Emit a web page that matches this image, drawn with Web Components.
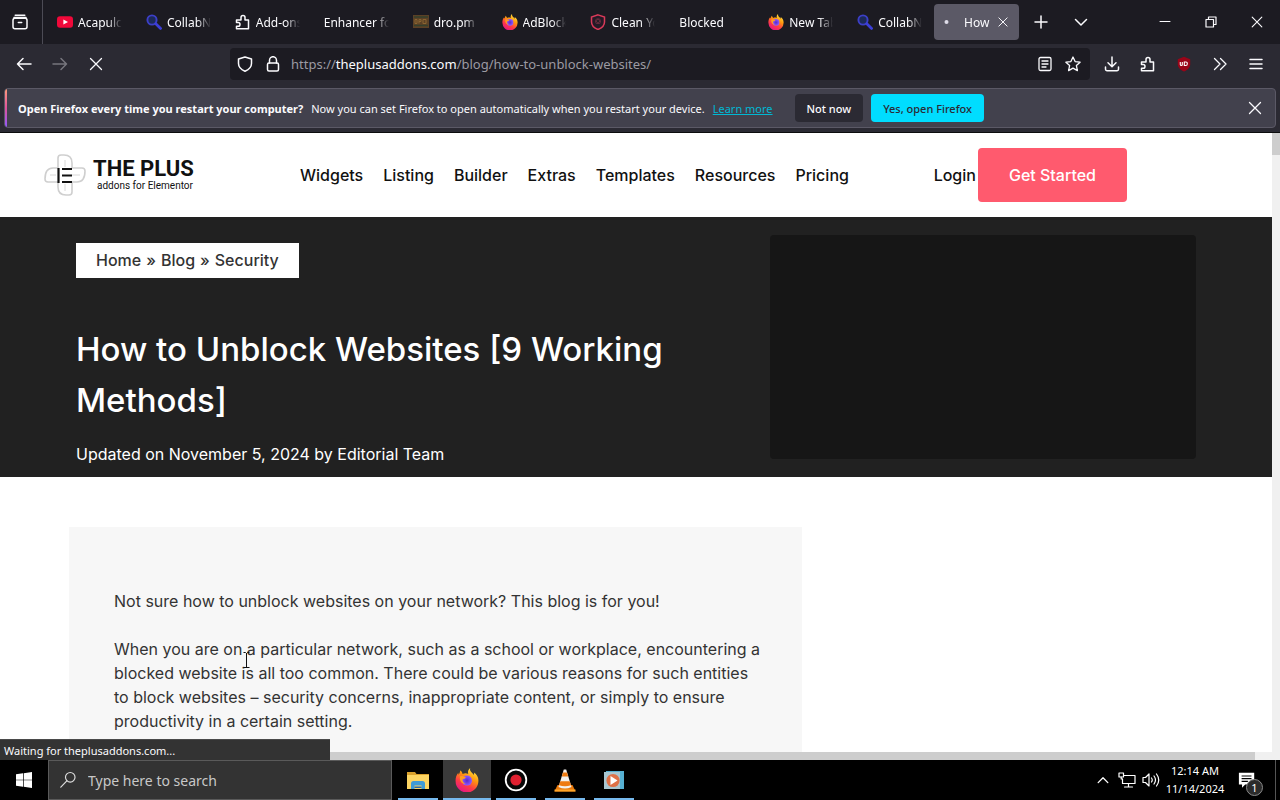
<!DOCTYPE html>
<html lang="en">
<head>
<meta charset="utf-8">
<meta name="viewport" content="width=device-width, initial-scale=1">
<title>How to Unblock Websites</title>
<style>
  html, body { margin: 0; height: 100%; }
  body {
    display: flex;
    flex-direction: column;
    overflow: hidden;
    background: #000;
    font-family: "Noto Sans", "Open Sans", sans-serif;
    font-size: 12px;
  }
  text-cursor { position: absolute; left: 242px; top: 647px; }
</style>
</head>
<body>
  <browser-window>
    <tab-strip slot="chrome">
      <browser-tab icon="youtube">Acapulco</browser-tab>
      <browser-tab icon="lens">CollabNet</browser-tab>
      <browser-tab icon="puzzle">Add-ons</browser-tab>
      <browser-tab>Enhancer for</browser-tab>
      <browser-tab icon="dropm">dro.pm</browser-tab>
      <browser-tab icon="firefox">AdBlock</browser-tab>
      <browser-tab icon="redshield">Clean You</browser-tab>
      <browser-tab>Blocked</browser-tab>
      <browser-tab icon="firefox">New Tab</browser-tab>
      <browser-tab icon="lens">CollabNet</browser-tab>
      <browser-tab icon="dot" active>How</browser-tab>
    </tab-strip>
    <nav-toolbar slot="chrome"></nav-toolbar>
    <notice-bar slot="chrome">
      <strong slot="lead">Open Firefox every time you restart your computer?</strong>
      Now you can set Firefox to open automatically when you restart your device.
    </notice-bar>

    <site-header></site-header>
    <post-hero>
      <span slot="title">How to Unblock Websites [9 Working Methods]</span>
      <span slot="meta">Updated on November 5, 2024 by Editorial Team</span>
    </post-hero>
    <post-body>
      <p>Not sure how to unblock websites on your network? This blog is for you!</p>
      <p>When you are on a particular network, such as a school or workplace, encountering a blocked website is all too common. There could be various reasons for such entities to block websites – security concerns, inappropriate content, or simply to ensure productivity in a certain setting.</p>
    </post-body>

    <span slot="status">Waiting for theplusaddons.com...</span>
  </browser-window>
  <task-bar></task-bar>
  <text-cursor></text-cursor>

<script>
// Icon set, each drawn in its own viewBox. Line icons use currentColor.
const line = (body, w = 1.3) =>
  `<g fill="none" stroke="currentColor" stroke-width="${w}" stroke-linecap="round" stroke-linejoin="round">${body}</g>`;

const ICONS = {
  history: [16, line('<path d="M3.2 1.2h9.6M2 3.6h12"/><rect x="1" y="4.2" width="14" height="10.6" rx="2"/><path d="M6.3 8.5h3.4"/>', 1.5)],
  youtube: [16, '<rect x="0" y="2.3" width="16" height="11.4" rx="3" fill="#f0093a"/><path d="M6.4 5.4v5.2L11 8z" fill="#fff"/>'],
  lens: [16, '<circle cx="6" cy="6" r="4.6" fill="#1c2a58" stroke="#3c3fc8" stroke-width="1.9"/><path d="M9.8 9.8l4.8 4.6" stroke="#3c3fd8" stroke-width="2.8" stroke-linecap="round"/>'],
  puzzle: [16, line('<path d="M1.5 14.8h12V6H10V3.4a2 2 0 0 0-4 0V6H1.5v2.6h1.7a1.8 1.8 0 0 1 0 3.6H1.5z"/>', 1.5)],
  dropm: [16, '<rect y="1" width="16" height="13" fill="#5b4126"/><path d="M1 3h14M1 11.5h14" stroke="#34402c" stroke-width="1.6"/><path d="M2 5.5v4h2v-4zM6 9.5v-4h2v2H6M10 5.5h3v4h-3z" fill="none" stroke="#8a6531"/>'],
  firefox: [24, `
    <defs>
      <linearGradient id="fx" x1=".85" y1="0" x2=".3" y2="1"><stop offset="0" stop-color="#fff14a"/><stop offset=".4" stop-color="#ff980e"/><stop offset=".7" stop-color="#ff3a45"/><stop offset="1" stop-color="#e31587"/></linearGradient>
      <radialGradient id="fp"><stop offset="0" stop-color="#592acb"/><stop offset="1" stop-color="#9059ff"/></radialGradient>
    </defs>
    <path fill="url(#fx)" d="M15.2 0c-.6 2 .2 3.2 1.5 4.5 1 1 1.6 1.5 2 2.5.5-.8.4-1.6.2-2.4C22 6.5 23.6 9.7 23.4 13A11.4 11.4 0 0 1 .6 13.2C.4 10 1.3 6.9 3.3 4.7c0 .9.1 1.4.4 2C4.8 5.2 5 3.7 5.2 2.6c1.2.6 2 1.9 2.400 3.300 2.200-.8 4-.7 5.700.1C12.500 3.800 13.200 1.500 15.200 0z"/>
    <circle cx="12" cy="12.6" r="5" fill="url(#fp)"/>
    <path fill="#ff9d21" d="M5 8.2c2-.4 4.4 0 6 1.5-1 .9-2.5 1-3.500 1.800-.2 1.800 1 3.600 3 4.100-3 .7-6.300-2-5.500-7.400z"/>`],
  redshield: [16, '<path d="M8 .9L14.500 3v5c0 3.500-2.600 6-6.500 7.500C4.100 14 1.500 11.500 1.500 8V3z" fill="#241a26" stroke="#d93a59" stroke-width="1.5"/><circle cx="8" cy="7.2" r="2.9" fill="#632b3c"/><path d="M6.500 5.700l3 3m0-3l-3 3" stroke="#1c1b22"/>'],
  dot: [16, '<circle cx="2.5" cy="8" r="2" fill="#dedce8"/>'],
  close: [16, line('<path d="M2.5 2.5l11 11M13.5 2.5l-11 11"/>')],
  plus: [16, line('<path d="M8 2v12M2 8h12"/>', 1.5)],
  down: [16, line('<path d="M2.5 5.5L8 11l5.5-5.5"/>', 1.5)],
  up: [16, line('<path d="M2.5 11L8 5.5l5.5 5.5"/>', 1.5)],
  minimize: [16, line('<path d="M3 7.5h10"/>', 1)],
  restore: [16, line('<path d="M3 5.5h7.500V13H3z"/><path d="M5.500 5.500V3H13v7.500h-2.500"/>', 1.2)],
  back: [16, line('<path d="M15 8H1.500M7 2.500L1.500 8 7 13.500"/>', 1.5)],
  forward: [16, line('<path d="M1 8h13.500M9 2.500L14.500 8 9 13.500"/>', 1.5)],
  shield: [16, line('<path d="M8 1l6.500 2v4.500c0 3.500-2.500 6-6.500 7.800-4-1.800-6.500-4.300-6.500-7.800V3z"/>', 1.5)],
  lock: [16, line('<rect x="2.5" y="7" width="11" height="8" rx="1.5"/><path d="M4.500 7V4.200a3.500 3.500 0 0 1 7 0V7"/>', 1.5)],
  reader: [16, line('<rect x="2" y="1.5" width="12" height="13" rx="1.5"/><path d="M5 5h6M5 8h6M5 11h4"/>')],
  star: [16, line('<path d="M8 1l2.100 4.600 5 .6-3.700 3.400 1 5L8 12.100l-4.400 2.500 1-5L.9 6.200l5-.6z"/>')],
  download: [16, line('<path d="M8 1v9.500M4 6.800l4 3.900 4-3.900M1.500 11v2.300c0 .8.6 1.400 1.400 1.400h10.200c.8 0 1.400-.6 1.400-1.400V11"/>', 1.5)],
  ublock: [16, '<path d="M8 .8l6.200 2.400v5C14.200 11.500 11.500 14 8 15.500 4.500 14 1.800 11.500 1.800 8.200v-5z" fill="#9a0418"/><path d="M4.300 6v2.500q0 1 1 1t1-1V6M8.300 6v3.500h1.500q1.500 0 1.500-1.800T9.800 6z" fill="none" stroke="#fff" stroke-width="1.1"/>'],
  chevrons: [16, line('<path d="M2.500 2.500L8 8l-5.500 5.500M8.500 2.500L14 8l-5.500 5.500"/>')],
  menu: [16, line('<path d="M2 3.500h12M2 8h12M2 12.500h12"/>', 1.5)],
  windows: [16, '<path fill="#fff" d="M0 2.300l7-1v6.400H0zM7.700 1.200L16 0v7.700H7.700zM0 8.300h7v6.400l-7-1zM7.700 8.300H16V16l-8.300-1.200z"/>'],
  search: [20, line('<circle cx="12.5" cy="7" r="5.3"/><path d="M8.700 10.900L2 18"/>')],
  folder: [24, '<path fill="#d9a02c" d="M1 4h8l1.500 2H23v15H1z"/><path fill="#fcd462" d="M1 7h22v14H1z"/><path fill="#3f9bd6" d="M5 21v-5.500Q5 13 7.500 13h9q2.500 0 2.500 2.500V21h-3.500v-3.500h-7V21z"/><path fill="#2268b0" d="M8.500 18.500h7V20h-7z"/>'],
  record: [24, '<circle cx="12" cy="12" r="10.3" fill="#080808" stroke="#fff" stroke-width="1.8"/><circle cx="12" cy="12" r="5.6" fill="#e02030"/>'],
  vlc: [24, '<path fill="#e8780a" d="M4.500 17h15l3 6.500h-21z"/><path fill="#ffa62b" d="M1.500 21.500h21v2h-21z"/><path fill="#f3f1ee" d="M10.800 1.500h2.400L18.500 19q-6.500 3-13 0z"/><path fill="#ee7b12" d="M10 4.500h4l1.200 4H8.800zM7.300 13.200h9.400l1.300 4q-6 2.300-12 0z"/>'],
  player: [24, '<path fill="#56b0d2" d="M4 3h18v18H4z"/><path fill="#a9c6d0" d="M2 4h16v17H2z"/><circle cx="11" cy="12.5" r="6.6" fill="#df7147"/><path fill="#fff" d="M8.500 8v9l7-4.500z"/>'],
  network: [18, line('<path d="M6 4.500h11v8H4.500V8M10.500 12.500V16M6.500 16h8"/><rect x="1" y="2" width="4.5" height="4"/><path d="M3.200 6v2h1.300"/>', 1.2)],
  sound: [18, line('<path d="M1 6.500h2.500L7 3v12l-3.500-3.500H1zM9.500 7q1.500 2 0 4M12 5q3 4 0 8M14.500 3q4.500 6 0 12"/>', 1.2)],
  message: [20, '<path fill="#fff" d="M1 2h17v13H8l-3.500 3.500V15H1z"/><path d="M4 5.500h11M4 8.500h11M4 11.500h7" stroke="#000" stroke-width="1.2"/>'],
};

class UiIcon extends HTMLElement {
  connectedCallback() {
    const [box, body] = ICONS[this.getAttribute('name')];
    const size = this.getAttribute('size') || 16;
    if (!this.shadowRoot) this.attachShadow({ mode: 'open' });
    this.shadowRoot.innerHTML = `
      <style>
        :host { display: block; flex: none; }
        svg { display: block; }
      </style>
      <svg width="${size}" height="${size}" viewBox="0 0 ${box} ${box}" aria-hidden="true">${body}</svg>`;
  }
}
customElements.define('ui-icon', UiIcon);

// Registers an element whose shadow root is stamped from a static string
function define(tag, html) {
  const tpl = document.createElement('template');
  tpl.innerHTML = html;
  customElements.define(tag, class extends HTMLElement {
    constructor() {
      super();
      this.attachShadow({ mode: 'open' }).appendChild(tpl.content.cloneNode(true));
    }
  });
}

const BUTTON_RESET = `
  button {
    display: flex; align-items: center; justify-content: center;
    border: 0; padding: 0; margin: 0; background: none;
    color: inherit; font: inherit; cursor: pointer;
  }`;

// --- browser chrome ---

define('browser-window', `
  <style>
    :host { display: flex; flex-direction: column; flex: 1; min-height: 0; background: #2b2a33; }
    .chrome { padding-bottom: 4px; border-bottom: 1px solid #0c0c0d; color: #fbfbfe; }
    .view {
      position: relative; flex: 1; min-height: 0; display: grid;
      grid-template: minmax(0, 1fr) 8px / minmax(0, 1fr) 8px; background: #fff;
    }
    .page { overflow: hidden; grid-row: 1; grid-column: 1; min-height: 0; background: #fff; }
    .vbar { grid-column: 2; grid-row: 1 / 3; background: #f0f0f0; }
    .vbar i { display: block; height: 22px; background: #cdcdcd; }
    .hbar { grid-column: 1; grid-row: 2; background: #f0f0f0; padding-right: 17px; }
    .hbar i { display: block; height: 8px; background: #cdcdcd; }
    .status {
      position: absolute; left: 0; bottom: 0; z-index: 1;
      box-sizing: border-box; width: 330px; height: 21px; padding: 1px 0 0 4px;
      border-top: 1px solid #4a4a4a; background: #333;
      color: #fbfbfe; font-size: 11px; line-height: 20px;
    }
  </style>
  <div class="chrome"><slot name="chrome"></slot></div>
  <div class="view">
    <main class="page"><slot></slot></main>
    <div class="vbar"><i></i></div>
    <div class="hbar"><i></i></div>
    <div class="status"><slot name="status"></slot></div>
  </div>
`);

define('tab-strip', `
  <style>
    ${BUTTON_RESET}
    :host { display: flex; height: 44px; background: #1c1b22; }
    .history { width: 43px; box-sizing: border-box; padding-right: 2px; border-right: 1px solid #4c4b55; }
    .tabs { display: flex; flex: 0 1 978px; min-width: 0; }
    .tool { width: 40px; }
    .window { display: flex; margin-left: auto; }
    .window button { width: 46px; }
  </style>
  <button class="history" aria-label="Firefox View"><ui-icon name="history"></ui-icon></button>
  <div class="tabs"><slot></slot></div>
  <button class="tool" aria-label="New tab"><ui-icon name="plus"></ui-icon></button>
  <button class="tool" aria-label="List all tabs"><ui-icon name="down"></ui-icon></button>
  <div class="window">
    <button aria-label="Minimize"><ui-icon name="minimize"></ui-icon></button>
    <button aria-label="Restore"><ui-icon name="restore"></ui-icon></button>
    <button aria-label="Close"><ui-icon name="close" size="14"></ui-icon></button>
  </div>
`);

class BrowserTab extends HTMLElement {
  connectedCallback() {
    if (this.shadowRoot) return;
    const icon = this.getAttribute('icon');
    const active = this.hasAttribute('active');
    this.attachShadow({ mode: 'open' }).innerHTML = `
      <style>
        ${BUTTON_RESET}
        :host { display: flex; flex: 1 1 0; min-width: 0; padding: 4px 2px; }
        .tab { display: flex; align-items: center; flex: 1; min-width: 0; padding: 0 8px 0 12px; gap: 5px; border-radius: 4px; }
        .title {
          --fade: 14px;
          flex: 1; min-width: 0; overflow: hidden; white-space: nowrap;
          -webkit-mask-image: linear-gradient(to left, transparent, #000 var(--fade));
          mask-image: linear-gradient(to left, transparent, #000 var(--fade));
        }
        :host([active]) .tab { background: #5b5966; padding: 0 10px; gap: 4px; }
        :host([active]) .title { --fade: 4px; }
      </style>
      <div class="tab" role="tab" aria-selected="${active}">
        ${icon ? `<ui-icon name="${icon}"></ui-icon>` : ''}
        <span class="title"><slot></slot></span>
        ${active ? '<button aria-label="Close tab"><ui-icon name="close" size="12"></ui-icon></button>' : ''}
      </div>`;
  }
}
customElements.define('browser-tab', BrowserTab);

define('nav-toolbar', `
  <style>
    ${BUTTON_RESET}
    :host { display: flex; align-items: center; gap: 4px; height: 40px; padding: 0 8px 4px; }
    button { width: 32px; height: 32px; }
    button[disabled] { color: #77767e; }
    .spring { flex: 0 1 110px; }
    .url {
      display: flex; align-items: center; flex: 1; min-width: 0; height: 32px;
      box-sizing: border-box; padding: 0 3px 0 1px; border-radius: 4px; background: #1c1b22;
    }
    .url button { width: 28px; }
    .address { flex: 1; padding-left: 4px; font-size: 13px; color: #9b9aa2; white-space: nowrap; }
    .address b { font-weight: 400; color: #fbfbfe; }
    .end { margin-left: 2px; }
  </style>
  <button aria-label="Back"><ui-icon name="back"></ui-icon></button>
  <button aria-label="Forward" disabled><ui-icon name="forward"></ui-icon></button>
  <button aria-label="Stop"><ui-icon name="close"></ui-icon></button>
  <div class="spring"></div>
  <div class="url">
    <button aria-label="Tracking protection"><ui-icon name="shield"></ui-icon></button>
    <button aria-label="Site information"><ui-icon name="lock"></ui-icon></button>
    <div class="address" role="textbox" aria-label="Address">https://<b>theplusaddons.com</b>/blog/how-to-unblock-websites/</div>
    <button aria-label="Reader view"><ui-icon name="reader"></ui-icon></button>
    <button aria-label="Bookmark this page"><ui-icon name="star"></ui-icon></button>
  </div>
  <button class="end" aria-label="Downloads"><ui-icon name="download"></ui-icon></button>
  <button aria-label="Extensions"><ui-icon name="puzzle"></ui-icon></button>
  <button aria-label="uBlock"><ui-icon name="ublock"></ui-icon></button>
  <button aria-label="More tools"><ui-icon name="chevrons"></ui-icon></button>
  <button aria-label="Menu"><ui-icon name="menu"></ui-icon></button>
`);

define('notice-bar', `
  <style>
    ${BUTTON_RESET}
    :host {
      display: flex; align-items: center; box-sizing: border-box; height: 40px;
      margin: 0 4px; border: 1px solid #5b5966; border-radius: 4px;
      background: #42414d; overflow: hidden; white-space: nowrap; font-size: 11px;
    }
    .edge { align-self: stretch; width: 2px; margin-right: 11px; background: linear-gradient(#ff9a7b, #e0539b, #9059ff); }
    .message { display: flex; gap: 8px; }
    a { color: #00b8d4; }
    .btn { height: 28px; padding: 0 12px; border-radius: 4px; background: #2b2a33; font-weight: 500; }
    .no { margin-left: 22px; }
    .yes { margin-left: 8px; background: #00ddff; color: #2b2a33; }
    .dismiss { width: 32px; height: 32px; margin-left: auto; margin-right: 4px; }
  </style>
  <span class="edge"></span>
  <div class="message"><slot name="lead"></slot><span><slot></slot></span><a href="#">Learn more</a></div>
  <button class="btn no">Not now</button>
  <button class="btn yes">Yes, open Firefox</button>
  <button class="dismiss" aria-label="Close"><ui-icon name="close"></ui-icon></button>
`);

// --- the site ---

define('site-header', `
  <style>
    :host {
      display: flex; align-items: center; height: 84px; padding: 0 145px 0 44px;
      font: 500 16px/24px Inter, "Open Sans", sans-serif; color: #111;
    }
    a { color: inherit; text-decoration: none; white-space: nowrap; }
    .logo { display: flex; align-items: center; gap: 7px; width: 256px; }
    .logo svg { flex: none; }
    .name { display: flex; flex-direction: column; font-family: Roboto, sans-serif; font-weight: 400; }
    .name b { font-size: 22px; line-height: 22px; }
    .name small { font-size: 10px; line-height: 12px; padding-left: 4px; }
    nav { display: flex; gap: 20px; }
    .login { margin-left: auto; }
    .cta {
      margin-left: 2px; padding: 15px 31px; border-radius: 4px;
      background: #ff5a6e; color: #fff;
    }
  </style>
  <a class="logo" href="#">
    <svg width="42" height="42" viewBox="0 0 42 42" fill="none" aria-hidden="true">
      <path stroke="#cfcfcf" stroke-width="1.6" d="M14 14V4q0-3 3-3h3q8 0 8 8v5h10q3 0 3 3 0 11-8 11h-5v10q0 3-3 3h-3q-8 0-8-8v-5H4q-3 0-3-3 0-11 8-11z"/>
      <path stroke="#d8d8d8" d="M21 6v7M28 21h8M21 30v7M6 21h6"/>
      <path stroke="#111" stroke-width="2.2" d="M14.500 14v15M18 15h10M18 21.500h10M18 28h10"/>
    </svg>
    <span class="name"><b>THE PLUS</b><small>addons for Elementor</small></span>
  </a>
  <nav>
    <a href="#">Widgets</a>
    <a href="#">Listing</a>
    <a href="#">Builder</a>
    <a href="#">Extras</a>
    <a href="#">Templates</a>
    <a href="#">Resources</a>
    <a href="#">Pricing</a>
  </nav>
  <a class="login" href="#">Login</a>
  <a class="cta" href="#">Get Started</a>
`);

define('post-hero', `
  <style>
    :host {
      display: grid; grid-template-columns: 62% 38%;
      padding: 18px 76px 11px; background: #212121; color: #fff;
      font: 16px/24px Inter, "Open Sans", sans-serif;
    }
    .crumbs {
      display: inline-flex; gap: 5px; margin-top: 8px; padding: 0 20px;
      background: #fff; color: #333; font-weight: 500; line-height: 35px;
    }
    .crumbs a { color: inherit; text-decoration: none; }
    h1 { margin: 46px 0 16px; font-size: 33px; line-height: 51px; font-weight: 500; }
    p { margin: 0; }
    .cover { height: 224px; border-radius: 4px; background: #161616; }
  </style>
  <div>
    <nav class="crumbs"><a href="#">Home</a>»<a href="#">Blog</a>»<a href="#">Security</a></nav>
    <h1><slot name="title"></slot></h1>
    <p><slot name="meta"></slot></p>
  </div>
  <div class="cover"></div>
`);

define('post-body', `
  <style>
    :host { display: block; padding: 50px 76px 50px 69px; font: 16px/24px Inter, "Open Sans", sans-serif; color: #333; }
    article { box-sizing: border-box; width: 65%; padding: 38px 36px 38px 45px; background: #f7f7f7; }
    ::slotted(p) { margin: 24px 0; }
  </style>
  <article><slot></slot></article>
`);

// --- desktop ---

define('text-cursor', `
  <style>:host { display: block; pointer-events: none; } svg { display: block; }</style>
  <svg width="9" height="22" viewBox="0 0 9 22" fill="none" stroke="#111" aria-hidden="true"><path d="M1.500 5.500h2l1 1 1-1h2M4.500 6v14M1.500 20.500h6"/></svg>
`);

define('task-bar', `
  <style>
    ${BUTTON_RESET}
    :host { display: flex; align-items: stretch; height: 40px; background: #000; color: #fff; }
    .start { width: 48px; }
    .search {
      display: flex; align-items: center; gap: 11px; box-sizing: border-box; width: 344px;
      padding-left: 10px; border: 1px solid #5a5a5a; background: #333; color: #ddd;
    }
    .search input {
      flex: 1; min-width: 0; border: 0; padding: 0; background: none; outline: 0;
      font: 14px "Noto Sans", "Open Sans", sans-serif; color: inherit;
    }
    .search input::placeholder { color: #c8c8c8; opacity: 1; }
    .apps { display: flex; gap: 1px; margin-left: 2px; }
    .apps button { width: 48px; background: linear-gradient(#76b9ed, #76b9ed) 50% 100% / 40px 2px no-repeat; }
    .apps .on { background-color: #3a3a3a; background-size: 48px 2px; }
    .tray { display: flex; align-items: center; margin-left: auto; }
    .tray button { width: 24px; height: 40px; }
    time { width: 64px; text-align: center; font-size: 11px; line-height: 18px; white-space: nowrap; }
    .tray .notes { position: relative; width: 48px; padding-right: 8px; }
    .badge {
      position: absolute; right: 12px; bottom: 4px; width: 15px; height: 15px;
      border: 1px solid #8a8a8a; border-radius: 50%; background: #2b2b2b;
      font-size: 11px; line-height: 15px;
    }
    .peek { align-self: stretch; width: 4px; border-left: 1px solid #555; }
  </style>
  <button class="start" aria-label="Start"><ui-icon name="windows"></ui-icon></button>
  <label class="search">
    <ui-icon name="search" size="18"></ui-icon>
    <input type="text" placeholder="Type here to search" aria-label="Search">
  </label>
  <div class="apps">
    <button aria-label="File Explorer"><ui-icon name="folder" size="24"></ui-icon></button>
    <button class="on" aria-label="Firefox"><ui-icon name="firefox" size="24"></ui-icon></button>
    <button aria-label="Recorder"><ui-icon name="record" size="24"></ui-icon></button>
    <button aria-label="VLC"><ui-icon name="vlc" size="24"></ui-icon></button>
    <button aria-label="Media Player"><ui-icon name="player" size="24"></ui-icon></button>
  </div>
  <div class="tray">
    <button aria-label="Show hidden icons"><ui-icon name="up" size="14"></ui-icon></button>
    <button aria-label="Network"><ui-icon name="network" size="18"></ui-icon></button>
    <button aria-label="Volume"><ui-icon name="sound" size="18"></ui-icon></button>
    <time datetime="2024-11-14T00:14">12:14 AM<br>11/14/2024</time>
    <button class="notes" aria-label="Notifications"><ui-icon name="message" size="18"></ui-icon><span class="badge">1</span></button>
    <span class="peek"></span>
  </div>
`);
</script>
</body>
</html>
